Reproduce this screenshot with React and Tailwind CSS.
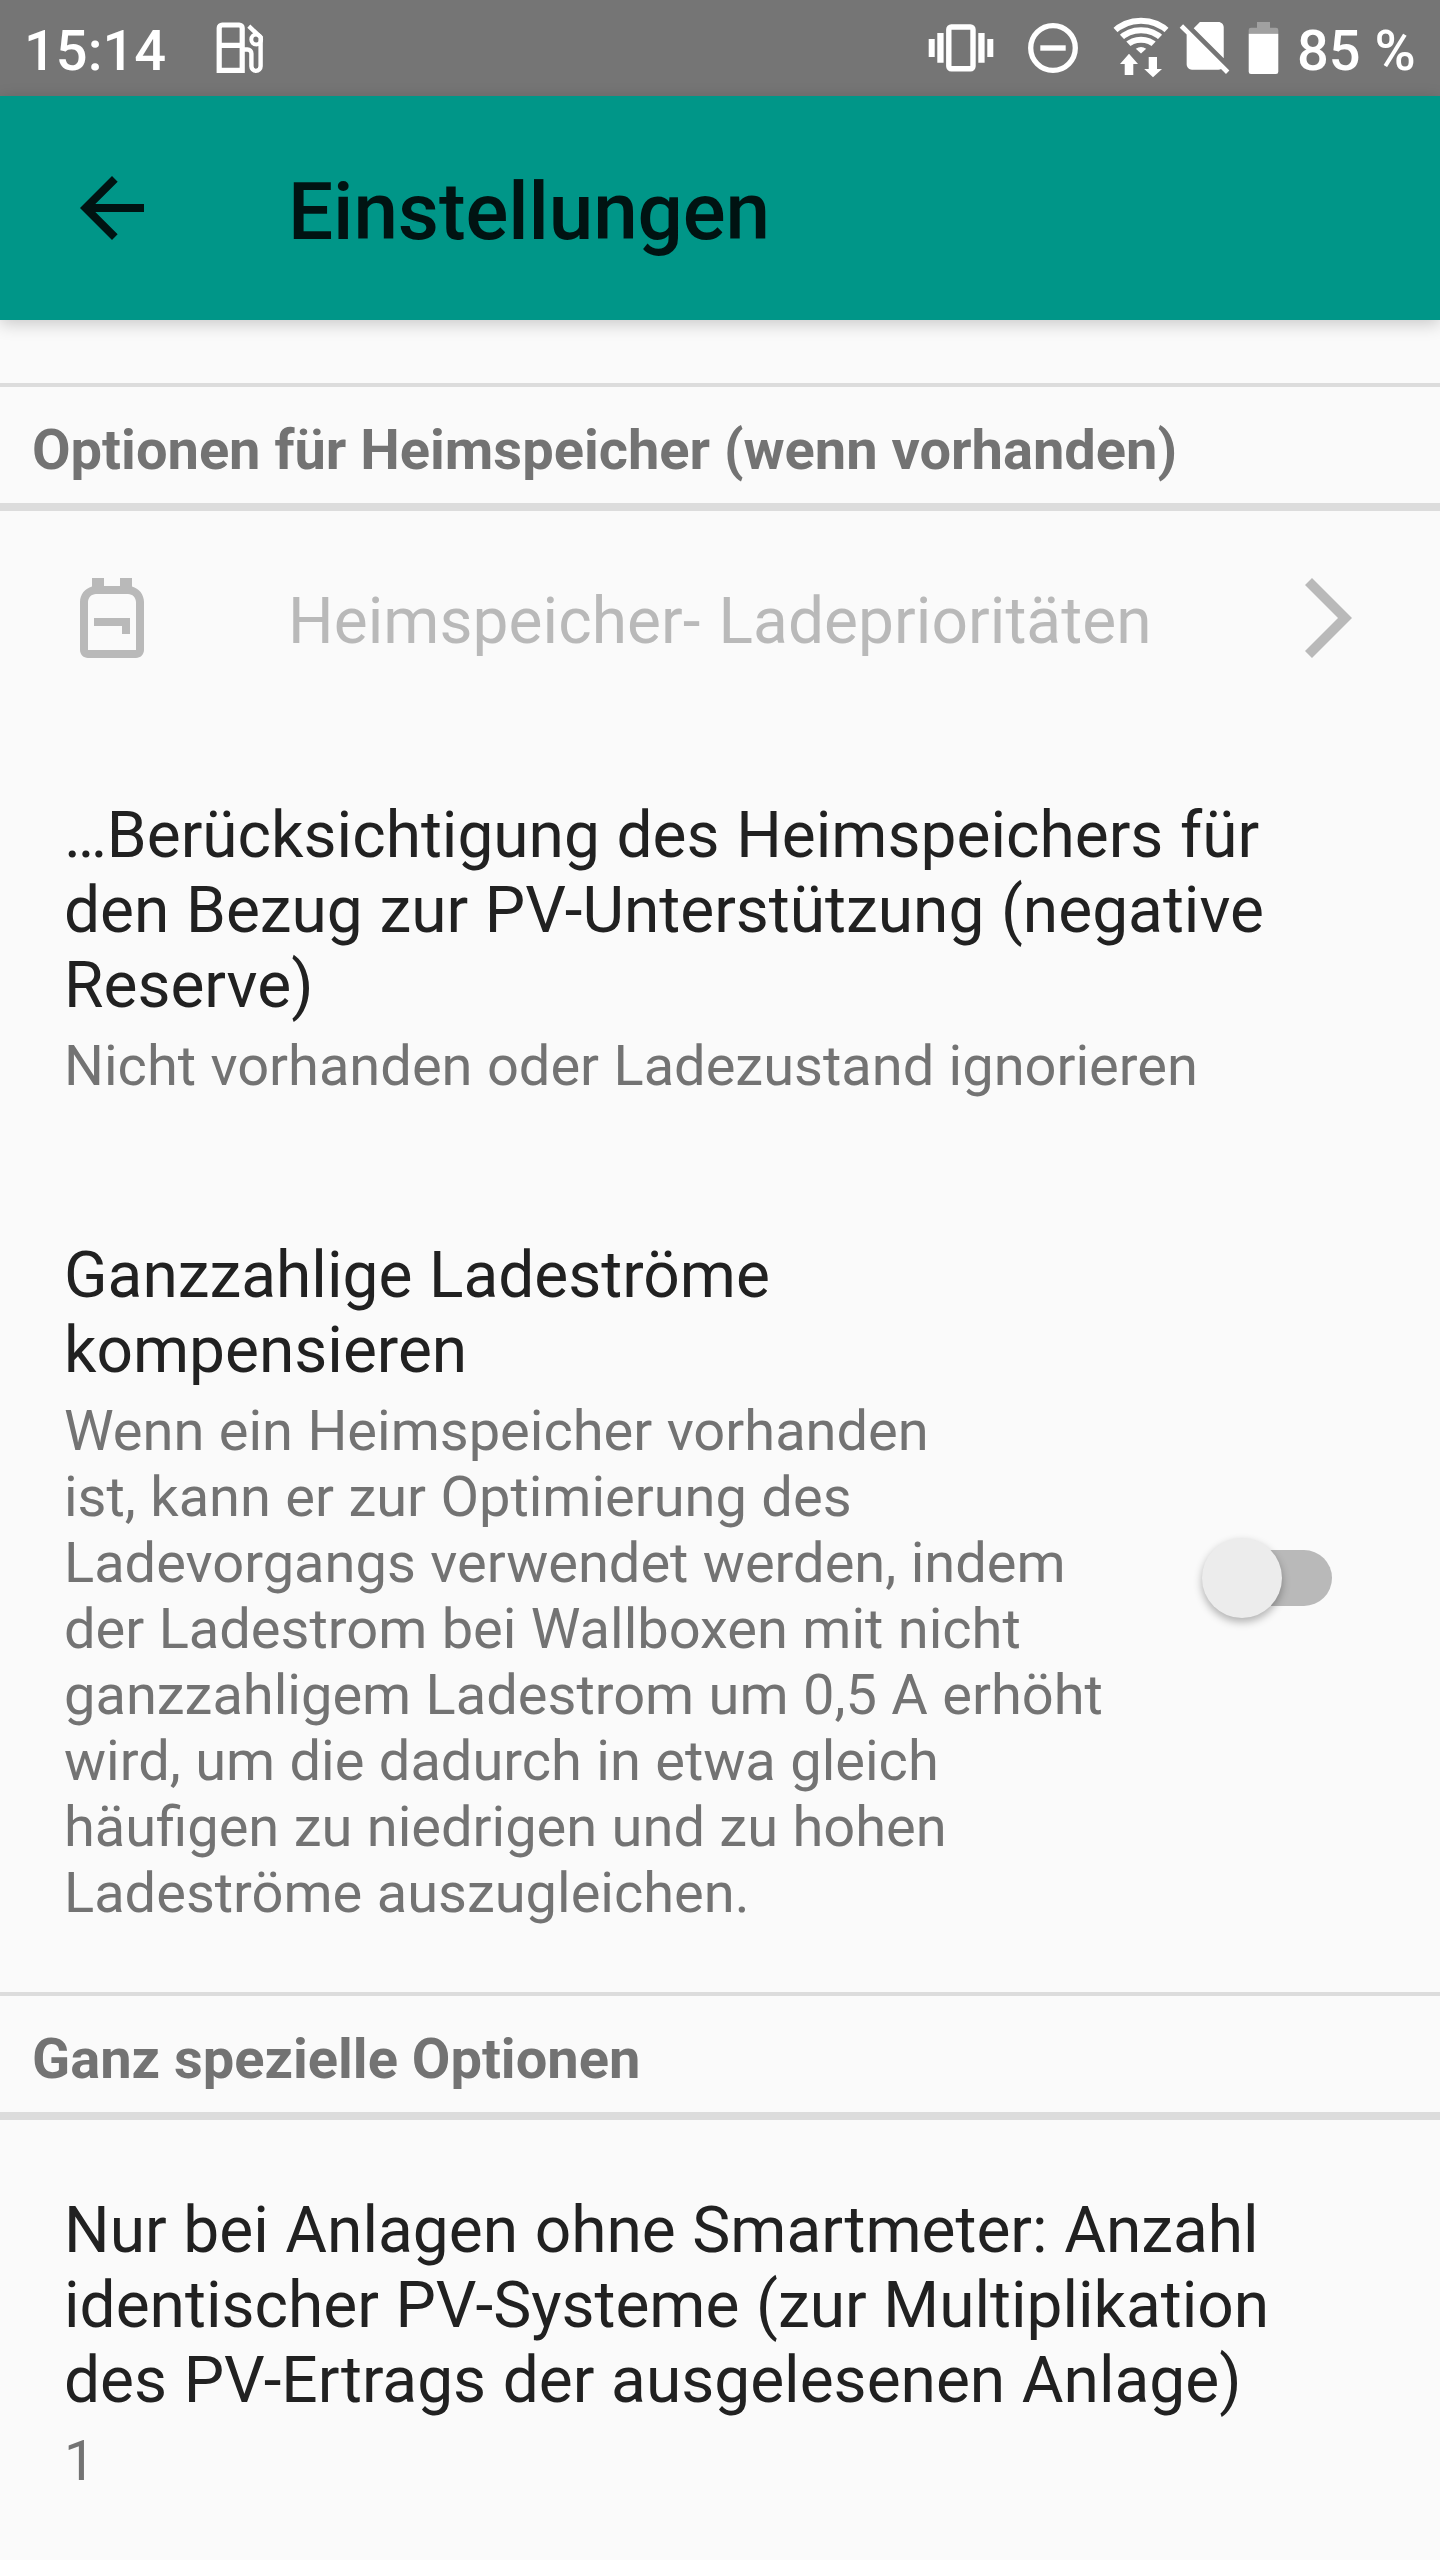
import { useState } from "react";

const homeStorage = {
  title: "…Berücksichtigung des Heimspeichers für den Bezug zur PV-Unterstützung (negative Reserve)",
  summary: "Nicht vorhanden oder Ladezustand ignorieren",
};

const pvSystems = {
  title:
    "Nur bei Anlagen ohne Smartmeter: Anzahl identischer PV-Systeme (zur Multiplikation des PV-Ertrags der ausgelesenen Anlage)",
  summary: "1",
};

function StatusIcons() {
  return (
    <svg viewBox="924 0 360 96" className="h-24 w-[360px] flex-none" fill="#fff" aria-hidden="true">
      {/* vibrate */}
      <path d="M928.7 39h6v18h-6zM937.3 33h6.3v29.7h-6.3zM978.3 33h6.3v29.7h-6.3zM987.3 39h6v18h-6z" />
      <rect x="948.8" y="27" width="24.2" height="41.8" rx="2.5" fill="none" stroke="#fff" strokeWidth="5.4" />

      {/* do not disturb */}
      <circle cx="1053" cy="48" r="22.3" fill="none" stroke="#fff" strokeWidth="5.3" />
      <path d="M1040.3 45.3h25.4v5.4h-25.4z" />

      {/* wifi with traffic arrows */}
      <clipPath id="wifi">
        <path d="M1141 57.2l-36-38.5V0h72v18.7z" />
      </clipPath>
      <g clipPath="url(#wifi)" fill="none" stroke="#fff" strokeWidth="6">
        <circle cx="1141" cy="61" r="40.3" />
        <circle cx="1141" cy="61" r="30.7" />
        <circle cx="1141" cy="61" r="21.3" />
      </g>
      <path d="M1141 53.4l-5.2-4.6q5.2-3.6 10.4 0z" />
      <path d="M1129 53.7l9 10.3h-4.7v11h-8.6V64h-4.7zM1153 77.3l-8.8-8.3h4.5V57h8.3v12h5z" />

      {/* no sim */}
      <path
        transform="translate(1173.4 14) scale(2.65)"
        d="M18.99 5c0-1.1-.89-2-1.99-2h-7L7.66 5.34 19 16.68 18.99 5zM3.65 3.88L2.38 5.15 5 7.77V19c0 1.1.9 2 2 2h10.01c.35 0 .67-.1.96-.26l1.88 1.88 1.27-1.27L3.65 3.88z"
      />

      {/* battery */}
      <path d="M1257 22h13v5.7h6a2.3 2.3 0 0 1 2.3 2.3v3.7h-29.6V30a2.3 2.3 0 0 1 2.3-2.3h6z" fill="#a0a0a0" />
      <path d="M1248.7 33.7h29.6v38a2.3 2.3 0 0 1-2.3 2.3h-25a2.3 2.3 0 0 1-2.3-2.3z" />
    </svg>
  );
}

function StatusBar() {
  return (
    <div className="flex h-24 items-center bg-[#757575] px-6 text-[56px] font-medium leading-[66px] text-white">
      <span className="w-[188px] pt-1.5">15:14</span>
      <svg viewBox="212 0 56 96" className="h-24 w-14 flex-none" fill="none" stroke="#fff" strokeWidth="5.2" aria-hidden="true">
        <path d="M219.2 70.4V28a3 3 0 0 1 3-3h17a3 3 0 0 1 3 3v42.4zM219.2 45.3h23" />
        <path d="M248.8 26.2l11.8 11V66.3a4.6 4.6 0 0 1-9.2 0V53.5a4 4 0 0 0-4-4h-5.2" strokeWidth="4.4" />
        <circle cx="256.2" cy="39.5" r="4.9" strokeWidth="4" />
      </svg>
      <div className="ml-auto flex items-center">
        <StatusIcons />
        <span className="ml-[13px] w-[119px] whitespace-nowrap pt-1.5">85 %</span>
      </div>
    </div>
  );
}

function AppBar() {
  return (
    <header className="relative flex h-56 items-center bg-[#009688] pl-16 text-black/87 shadow-[0_4px_16px_rgba(0,0,0,0.2)]">
      <svg viewBox="0 0 24 24" className="size-24" fill="currentColor" aria-hidden="true">
        <path d="M20 11H7.83l5.59-5.59L12 4l-8 8 8 8 1.41-1.41L7.83 13H20v-2z" />
      </svg>
      <h1 className="ml-32 pt-2 text-[80px] font-medium leading-[94px] tracking-[-0.1px]">Einstellungen</h1>
    </header>
  );
}

function SectionHeader({ children }) {
  return (
    <h2 className="h-32 border-t-4 border-b-8 border-[#dcdcdc] px-8 pt-[30px] text-[56px] font-bold leading-[66px] text-[#737373]">
      {children}
    </h2>
  );
}

function Preference({ title, summary, children }) {
  return (
    <div className="flex items-center px-16">
      <div className="flex-1">
        <h3 className="text-[64px] leading-[75px] text-[#212121] [word-spacing:0.75px]">{title}</h3>
        <p className="mt-2.5 text-[56px] leading-[66px] text-[#737373] [word-spacing:0.5px]">{summary}</p>
      </div>
      {children}
    </div>
  );
}

function Switch({ checked, onChange }) {
  return (
    <button
      type="button"
      role="switch"
      aria-checked={checked}
      onClick={() => onChange(!checked)}
      className="relative mb-2 mr-11 flex h-20 w-[130px] flex-none items-center"
    >
      <span className="ml-2.5 h-14 w-[120px] rounded-full bg-[#b9b9b9]" />
      <span className="absolute left-0 top-0 size-20 rounded-full bg-[#ececec] shadow-[0_4px_8px_rgba(0,0,0,0.3)]" />
    </button>
  );
}

export default function App() {
  const [compensate, setCompensate] = useState(false);

  return (
    <div className="h-[2560px] w-[1440px] overflow-hidden bg-[#fafafa] font-['Roboto',sans-serif]">
      <StatusBar />
      <AppBar />
      <main className="pt-[63px]">
        <SectionHeader>Optionen für Heimspeicher (wenn vorhanden)</SectionHeader>
        <div className="flex h-[214px] items-center pl-16 pr-[88px] text-[#b9b9b9]">
          <svg viewBox="0 0 24 24" className="size-24 flex-none" fill="currentColor" aria-hidden="true">
            <path d="M17 4.14V2h-3v2h-4V2H7v2.14c-1.72.45-3 2-3 3.86v12c0 1.1.9 2 2 2h12c1.1 0 2-.9 2-2V8c0-1.86-1.28-3.41-3-3.86zM18 20H6V8c0-1.1.9-2 2-2h8c1.1 0 2 .9 2 2v12zm-1.5-8v4h-2v-2h-7v-2h9z" />
          </svg>
          <span className="ml-32 pt-1.5 text-[64px] leading-[75px] tracking-[0.06px] [word-spacing:2px]">
            Heimspeicher- Ladeprioritäten
          </span>
          <svg viewBox="0 0 47 80" className="ml-auto h-20 w-[47px] flex-none" fill="currentColor" aria-hidden="true">
            <path d="M7 0l40 40L7 80l-7-7 33-33L0 7z" />
          </svg>
        </div>
        <div className="pt-[73px]">
          <Preference title={homeStorage.title} summary={homeStorage.summary} />
        </div>
        <div className="pt-[139px]">
          <Preference
            title={<>Ganzzahlige Ladeströme<br />kompensieren</>}
            summary={
              <>
                Wenn ein Heimspeicher vorhanden<br />ist, kann er zur Optimierung des<br />
                Ladevorgangs verwendet werden, indem<br />der Ladestrom bei Wallboxen mit nicht<br />
                ganzzahligem Ladestrom um 0,5 A erhöht<br />wird, um die dadurch in etwa gleich<br />
                häufigen zu niedrigen und zu hohen<br />Ladeströme auszugleichen.
              </>
            }
          >
            <Switch checked={compensate} onChange={setCompensate} />
          </Preference>
        </div>
        <div className="pt-[66px]">
          <SectionHeader>Ganz spezielle Optionen</SectionHeader>
        </div>
        <div className="pt-[73px]">
          <Preference title={pvSystems.title} summary={pvSystems.summary} />
        </div>
      </main>
    </div>
  );
}
